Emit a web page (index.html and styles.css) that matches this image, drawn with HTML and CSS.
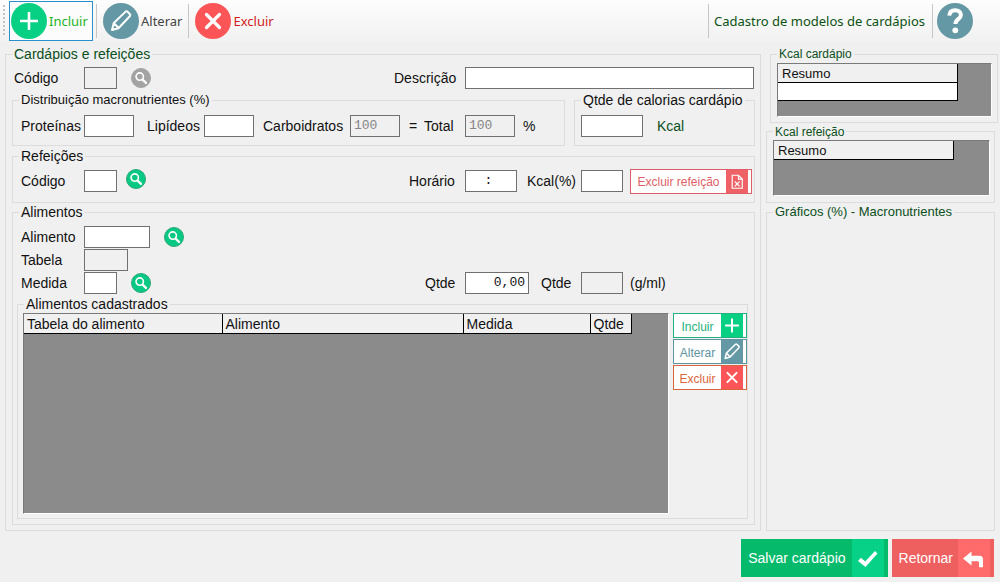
FILE: index.html
```html
<!DOCTYPE html>
<html lang="pt-BR">
<head>
<meta charset="utf-8">
<meta name="viewport" content="width=device-width, initial-scale=1">
<title>Cadastro de modelos de cardápios</title>
<link rel="stylesheet" href="styles.css">
</head>
<body>
<svg class="sprite" width="0" height="0" aria-hidden="true">
  <symbol id="search" viewBox="0 0 20 20">
    <circle cx="8.6" cy="8.4" r="4.1" fill="none" stroke="#fff" stroke-width="1.8"/>
    <path d="M11.900 11.900L15.500 15.500" stroke="#fff" stroke-width="2.600" stroke-linecap="round"/>
  </symbol>
  <symbol id="plus" viewBox="0 0 36 36"><path d="M18 9v18M9 18h18" stroke="#fff" stroke-width="2.6"/></symbol>
  <symbol id="pencil" viewBox="0 0 36 36"><path d="M9 27l1.800-7L22.600 8.600q1-.8 2 .2l2.200 2.200q1 1 .2 2L15.500 25.200zM11 20.200l4.500 4.800" fill="none" stroke="#fff" stroke-width="2" stroke-linejoin="round"/></symbol>
  <symbol id="cross" viewBox="0 0 36 36"><path d="M11.500 11.500l13 13M24.500 11.500l-13 13" stroke="#fff" stroke-width="3.200" stroke-linecap="round"/></symbol>
  <symbol id="cross-thin" viewBox="0 0 36 36"><path d="M12 12l12 12M24 12l-12 12" stroke="#fff" stroke-width="2.600" stroke-linecap="round"/></symbol>
</svg>

<header class="toolbar">
  <span class="grip"></span>
  <button class="tool tool-on" type="button"><svg class="disc green"><use href="#plus"/></svg>Incluir</button>
  <span class="sep"></span>
  <button class="tool" type="button"><svg class="disc teal"><use href="#pencil"/></svg>Alterar</button>
  <span class="sep"></span>
  <button class="tool tool-del" type="button"><svg class="disc red"><use href="#cross"/></svg>Excluir</button>
  <span class="sep push"></span>
  <h1 class="title">Cadastro de modelos de cardápios</h1>
  <span class="sep"></span>
  <button class="help" type="button" aria-label="Ajuda">
    <svg class="disc teal" viewBox="0 0 36 36"><path d="M12.300 12.600C12.500 9 15 7.200 18.200 7.200c3.400 0 5.700 1.900 5.700 4.700 0 4.200-5.500 4.300-5.500 9" fill="none" stroke="#fff" stroke-width="4"/><circle cx="18.300" cy="27.300" r="2.900" fill="#fff"/></svg>
  </button>
</header>

<main class="main">
  <fieldset class="group outer">
    <legend class="green-text">Cardápios e refeições</legend>
    <div class="row row-top">
      <label class="first" for="codigo">Código</label>
      <input class="w33" id="codigo" disabled>
      <button class="find gray" type="button" aria-label="Buscar cardápio" disabled><svg><use href="#search"/></svg></button>
      <label class="descr push" for="descricao">Descrição</label>
      <input class="w-descr" id="descricao">
    </div>

    <div class="pair">
      <fieldset class="group macro">
        <legend>Distribuição macronutrientes (%)</legend>
        <div class="row">
          <label class="first" for="prot">Proteínas</label><input class="w50" id="prot">
          <label class="lip" for="lip">Lipídeos</label><input class="w50" id="lip">
          <label class="carb" for="carb">Carboidratos</label><input class="w50" id="carb" value="100" disabled>
          <span class="equals">=</span>
          <label class="total" for="total">Total</label><input class="w50" id="total" value="100" disabled>
          <span class="unit">%</span>
        </div>
      </fieldset>
      <fieldset class="group calories">
        <legend>Qtde de calorias cardápio</legend>
        <div class="row">
          <input class="w62" id="kcal" aria-label="Qtde de calorias cardápio">
          <label class="kcal-unit green-text" for="kcal">Kcal</label>
        </div>
      </fieldset>
    </div>

    <fieldset class="group meals">
      <legend>Refeições</legend>
      <div class="row">
        <label class="first" for="cod-ref">Código</label><input class="w33" id="cod-ref">
        <button class="find near" type="button" aria-label="Buscar refeição"><svg><use href="#search"/></svg></button>
        <label class="time push" for="horario">Horário</label><input class="w52" id="horario" value="  :">
        <label class="pct" for="kcal-ref">Kcal(%)</label><input class="w42" id="kcal-ref">
        <button class="small-btn coral" type="button"><span>Excluir refeição</span>
          <svg viewBox="0 0 22 24"><path d="M6 5.500h6.500l4 4v9.500H6zM12.500 5.500v4h4M8.700 12l5 5M13.700 12l-5 5" fill="none" stroke="#fff" stroke-width="1.200"/></svg>
        </button>
      </div>
    </fieldset>

    <fieldset class="group foods">
      <legend>Alimentos</legend>
      <div class="row"><label class="first" for="alimento">Alimento</label><input class="w66" id="alimento">
        <button class="find" type="button" aria-label="Buscar alimento"><svg><use href="#search"/></svg></button></div>
      <div class="row"><label class="first" for="tabela">Tabela</label><input class="w44" id="tabela" disabled></div>
      <div class="row"><label class="first" for="medida">Medida</label><input class="w33" id="medida">
        <button class="find" type="button" aria-label="Buscar medida"><svg><use href="#search"/></svg></button>
        <label class="qty push" for="qtde">Qtde</label><input class="w64 right" id="qtde" value="0,00">
        <label class="qty2" for="gml">Qtde</label><input class="w42" id="gml" disabled>
        <span class="gml">(g/ml)</span></div>

      <fieldset class="group listed">
        <legend>Alimentos cadastrados</legend>
        <div class="list">
          <div class="sheet">
            <table class="foods-table">
              <thead><tr><th class="c-table">Tabela do alimento</th><th class="c-food">Alimento</th><th class="c-measure">Medida</th><th class="c-qty">Qtde</th></tr></thead>
            </table>
          </div>
          <div class="actions">
            <button class="small-btn add" type="button"><span>Incluir</span><svg viewBox="4 3 28 30"><use href="#plus" width="36" height="36"/></svg></button>
            <button class="small-btn edit" type="button"><span>Alterar</span><svg viewBox="4 3 28 30"><use href="#pencil" width="36" height="36"/></svg></button>
            <button class="small-btn del" type="button"><span>Excluir</span><svg viewBox="4 3 28 30"><use href="#cross-thin" width="36" height="36"/></svg></button>
          </div>
        </div>
      </fieldset>
    </fieldset>
  </fieldset>

  <aside class="side">
    <fieldset class="group menu-kcal">
      <legend class="green-text">Kcal cardápio</legend>
      <div class="sheet">
        <table class="summary"><thead><tr><th>Resumo</th></tr></thead><tbody><tr><td></td></tr></tbody></table>
      </div>
    </fieldset>
    <fieldset class="group meal-kcal">
      <legend class="green-text">Kcal refeição</legend>
      <div class="sheet">
        <table class="summary"><thead><tr><th>Resumo</th></tr></thead></table>
      </div>
    </fieldset>
    <fieldset class="group charts">
      <legend class="green-text">Gráficos (%) - Macronutrientes</legend>
    </fieldset>
  </aside>
</main>

<footer class="footer">
  <button class="big save" type="button"><span>Salvar cardápio</span>
    <svg viewBox="0 0 32 38"><path d="M6 22l3-3.200 4.200 3.600L23 12l2.500 2.500L13.500 28z" fill="#fff"/></svg></button>
  <button class="big back" type="button"><span>Retornar</span>
    <svg viewBox="0 0 32 38"><path d="M5 19.500l8.500-7v4.200h8q3.500 0 3.500 3.500v8h-4v-4.700q0-1.300-1.500-1.300h-6v4.300z" fill="#fff"/></svg></button>
</footer>
</body>
</html>
```
FILE: styles.css
```css
* { box-sizing: border-box; }

body {
  margin: 0;
  min-height: 100vh;
  display: flex;
  flex-direction: column;
  background: #f0f0f0;
  color: #111;
  font: 14px/16px "Liberation Sans", Arial, sans-serif;
}

button, input { font: inherit; color: inherit; margin: 0; }
button { padding: 0; border: 0; background: none; flex: none; }
svg { display: block; flex: none; }
.sprite { position: absolute; }
.push { margin-left: auto; }
.green-text { color: #0b4f1c; }

/* Toolbar */
.toolbar {
  display: flex;
  align-items: center;
  height: 42px;
  margin-bottom: 4px;
  padding: 0 27px 0 3px;
  background: linear-gradient(#fdfdfd, #f1f1f1);
  font-family: "Noto Sans", "Open Sans", sans-serif;
  font-size: 13px;
}
.grip { width: 2px; height: 32px; margin-right: 4px; background: repeating-linear-gradient(#c4c4c4 0 2px, transparent 2px 4px); }
.tool {
  display: flex;
  align-items: center;
  gap: 2px;
  height: 40px;
  min-width: 84px;
  padding: 0 2px 0 1px;
  border: 1px solid transparent;
  color: #444;
}
.tool-on { border-color: #2b8fcb; background: #fcfcfc; color: #1eb41e; }
.tool-del { color: #d01c1c; }
.disc { width: 36px; height: 36px; border-radius: 50%; }
.green { background: #07cf83; }
.teal { background: #6598a5; }
.red { background: #fb5558; }
.sep { width: 1px; height: 34px; margin: 0 4px 0 3px; background: #c6c6c6; }
.sep.push { margin-left: auto; }
.title { margin: 0 4px 0 1px; font-size: 13px; font-weight: 400; color: #0b5212; }

/* Group boxes */
.group {
  min-width: 0;
  margin: 0;
  padding: 0 5px 0 4px;
  border: 1px solid #dcdcdc;
}
.group legend { margin-left: 2px; padding: 0 2px; height: 16px; }
.group .group .row { padding-left: 4px; }

.main { flex: 1; display: flex; gap: 5px; padding: 0 2px 0 5px; }
.outer { flex: 1; display: flex; flex-direction: column; padding: 0 5px 5px 6px; }
.outer > legend { margin-left: 0; }

.row { display: flex; align-items: center; height: 22px; }
.row-top { margin: 5px 0 3px; padding: 0 1px 0 2px; }
.row label, .row span { flex: none; }
.row .first { width: 63px; }
.row-top .first { width: 70px; }

input {
  height: 22px;
  padding: 0 3px 2px;
  border: 1px solid #707070;
  border-radius: 0;
  background: #fff;
  font: 13px/16px "Liberation Mono", monospace;
  min-width: 0;
  flex: none;
}
input:disabled { background: #f0f0f0; color: #858585; }
.right { text-align: right; }
.w33 { width: 33px; }
.w42 { width: 42px; }
.w44 { width: 44px; }
.w50 { width: 50px; }
.w52 { width: 52px; white-space: pre; }
.w62 { width: 62px; }
.w64 { width: 64px; }
.w66 { width: 66px; }
.w-descr { flex: 0 1 289px; }

.find { margin-left: 14px; width: 20px; height: 20px; border-radius: 50%; background: #07c983; border: 1px solid #2ea878; }
.find svg { width: 18px; height: 18px; }
.find.gray { background: #a3a3a3; border-color: #a3a3a3; }
.find.near { margin: 0 0 4px 9px; }
.descr { width: 71px; }

.pair { display: flex; gap: 9px; margin-bottom: 2px; }
.macro { flex: 1; padding-top: 7px; padding-bottom: 8px; }
.macro legend, .charts legend { font-size: 13px; }
.calories { flex: 0 0 181px; padding-top: 7px; padding-bottom: 8px; }
.group .calories .row { padding-left: 2px; }
.lip { width: 57px; margin-left: 13px; }
.carb { width: 87px; margin-left: 9px; }
.equals { width: 15px; margin-left: 9px; }
.total { width: 41px; }
.unit { margin-left: 8px; }
.kcal-unit { margin-left: 14px; }

.meals { padding: 6px 2px 10px 4px; margin-bottom: 1px; }
.time { width: 56px; }
.pct { width: 54px; margin-left: 10px; }
.meals .small-btn { width: 122px; margin-left: 7px; }

.foods { flex: 1; display: flex; flex-direction: column; gap: 1px; padding: 6px 6px 5px 4px; }
.qty { width: 40px; }
.qty2 { width: 40px; margin-left: 12px; }
.gml { width: 118px; margin-left: 7px; }

.listed { flex: 1; display: flex; flex-direction: column; margin-top: 1px; padding: 1px 0 4px 5px; }
.listed > legend { margin-left: 1px; }
.list { flex: 1; display: flex; gap: 4px; }
.list .sheet { flex: 1; min-width: 0; }
.actions { display: flex; flex-direction: column; gap: 1px; width: 74px; }

/* Data sheets */
.sheet { background: #8b8b8b; border: 1px solid #7a7a7a; border-right-color: #fff; border-bottom-color: #fff; }
table { border-collapse: collapse; table-layout: fixed; }
th, td { padding: 2px 2px 0 4px; border-right: 1px solid #000; border-bottom: 1px solid #000; text-align: left; font-weight: 400; white-space: nowrap; }
th { background: #f0f0f0; }
td { background: #fff; }
.foods-table { width: 607px; }
.foods-table th { height: 19px; padding-left: 3px; }
.c-table { width: 198px; }
.c-food { width: 241px; }
.c-measure { width: 127px; }
.c-qty { width: 41px; }
.summary { width: 180px; font-size: 13px; }
.summary th, .summary td { height: 18px; }

/* Small outlined buttons */
.small-btn {
  display: flex;
  align-items: stretch;
  height: 25px;
  padding-right: 3px;
  border: 1px solid;
  background: #fff;
  font-size: 12px;
}
.small-btn span { flex: 1; padding-top: 2px; align-self: center; text-align: center; }
.small-btn svg { width: 22px; height: 23px; }
.coral { color: #df5d66; }
.coral svg { background: #ee6267; }
.add { color: #22b07c; }
.add svg { background: #07cf83; }
.edit { color: #5e93a2; }
.edit svg { background: #6598a5; }
.del { color: #d8663a; }
.del svg { background: #fb5558; }

/* Side column */
.side { width: 232px; display: flex; flex-direction: column; }
.side .group { margin-right: 3px; }
.side .menu-kcal { margin: 0 0 1px 4px; padding: 1px 5px 5px 6px; }
.menu-kcal legend, .meal-kcal legend { font-size: 12px; }
.menu-kcal .sheet { height: 54px; }
.meal-kcal { padding: 1px 4px 6px 6px; margin-bottom: 1px; }
.meal-kcal legend { margin-left: 0; height: 15px; }
.menu-kcal legend { margin-left: 0; }
.meal-kcal .sheet { height: 56px; }
.charts { flex: 1; padding-left: 6px; }
.charts legend { margin-left: 0; }

/* Footer */
.footer { display: flex; justify-content: flex-end; gap: 4px; padding: 8px 6px 5px; }
.big { display: flex; align-items: center; height: 38px; padding: 0 4px 0 7px; color: #fff; }
.big svg { width: 32px; height: 38px; }
.save { gap: 6px; background: #06ba6b; }
.save svg { background: #07d187; }
.back { gap: 5px; background: #ee5f60; }
.back svg { background: #ff6b6b; }
```
